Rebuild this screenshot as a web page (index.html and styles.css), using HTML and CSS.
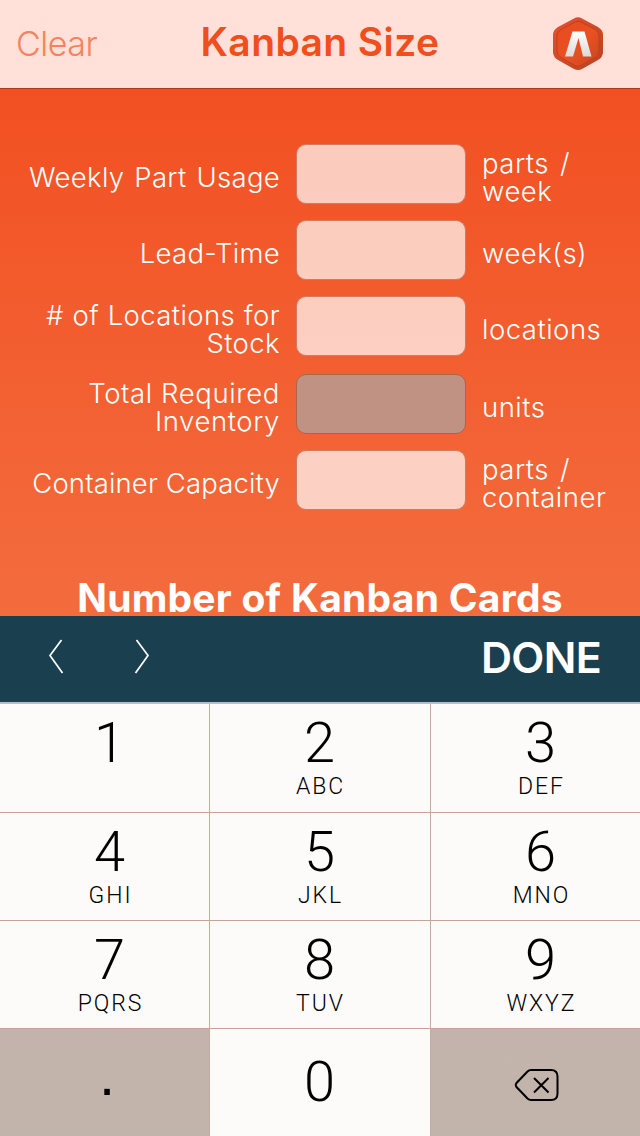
FILE: index.html
```html
<!DOCTYPE html>
<html lang="en">
<head>
<meta charset="utf-8">
<title>Kanban Size</title>
<link rel="stylesheet" href="styles.css">
</head>
<body>
<div class="screen">
  <header class="navbar">
    <span class="clear">Clear</span>
    <h1 class="title">Kanban Size</h1>
    <svg class="logo" width="52" height="56" viewBox="0 0 52 56">
      <defs>
        <linearGradient id="rim" x1="0" y1="0" x2="1" y2="1"><stop offset="0" stop-color="#e8502f"/><stop offset="1" stop-color="#b9421f"/></linearGradient>
        <linearGradient id="face" x1="0" y1="0" x2="1" y2="1"><stop offset="0" stop-color="#e84b20"/><stop offset=".55" stop-color="#e95022"/><stop offset="1" stop-color="#c44720"/></linearGradient>
        <linearGradient id="mark" x1="0" y1="0" x2="0" y2="1"><stop offset="0" stop-color="#fff"/><stop offset="1" stop-color="#ddd9d8"/></linearGradient>
      </defs>
      <path d="M22 2.400Q26 0.200 30 2.400L46 11Q51 14 51 19V36Q51 41 46 44L30 53Q26 55.200 22 53L6 44Q1 41 1 36V19Q1 14 6 11Z" fill="url(#rim)"/>
      <path d="M23 6Q26 4.500 29 6L43 13.500Q47 16 47 20V35Q47 39 43 41.500L29 49.500Q26 51 23 49.500L9 41.500Q5 39 5 35V20Q5 16 9 13.500Z" fill="url(#face)" stroke="#bd4020" stroke-width="1"/>
      <path d="M20.500 15.500H32.500L39.500 40.500H31L26.500 22L21 40.500H13Z" fill="url(#mark)"/>
    </svg>
  </header>

  <main class="form">
    <div class="row"><label class="label">Weekly Part Usage</label><div class="field"></div><span class="unit">parts /<br>week</span></div>
    <div class="row"><label class="label">Lead-Time</label><div class="field"></div><span class="unit">week(s)</span></div>
    <div class="row row-total"><label class="label label-stock"># of Locations for<br>Stock</label><div class="field"></div><span class="unit">locations</span></div>
    <div class="row"><label class="label label-wide">Total Required<br>Inventory</label><div class="field field-disabled"></div><span class="unit">units</span></div>
    <div class="row"><label class="label label-tight">Container Capacity</label><div class="field"></div><span class="unit">parts /<br>container</span></div>
    <h2 class="result">Number of Kanban Cards</h2>
  </main>

  <div class="toolbar">
    <svg class="arrows" width="104" height="36" viewBox="0 0 104 36" fill="none" stroke="#fff" stroke-width="1.700"><path d="M14.500 1 3 16.500 15.500 34"/><path d="M89.500 1 101 16.500 88.500 34"/></svg>
    <span class="done">DONE</span>
  </div>

  <div class="keypad">
    <div class="key"><b class="digit">1</b></div>
    <div class="key mid"><b class="digit">2</b><span class="letters">ABC</span></div>
    <div class="key"><b class="digit">3</b><span class="letters">DEF</span></div>
    <div class="key"><b class="digit">4</b><span class="letters">GHI</span></div>
    <div class="key mid"><b class="digit">5</b><span class="letters">JKL</span></div>
    <div class="key"><b class="digit">6</b><span class="letters">MNO</span></div>
    <div class="key"><b class="digit">7</b><span class="letters">PQRS</span></div>
    <div class="key mid"><b class="digit">8</b><span class="letters">TUV</span></div>
    <div class="key"><b class="digit">9</b><span class="letters">WXYZ</span></div>
    <div class="key dark point"><b class="dot">.</b></div>
    <div class="key mid zero"><b class="digit">0</b></div>
    <div class="key dark erase">
      <svg width="46" height="34" viewBox="0 0 46 34" fill="none" stroke="#000" stroke-width="2"><path d="M17 2H37Q43.500 2 43.500 8.500V25.500Q43.500 32 37 32H17Q15 32 13.500 30.500L2.500 19Q1 17 2.500 15L13.500 3.500Q15 2 17 2Z"/><path d="M20 10 34.500 24.500M34.500 10 20 24.500"/></svg>
    </div>
  </div>
</div>
</body>
</html>
```
FILE: styles.css
```css
* { box-sizing: border-box; }
body { margin: 0; font-family: Inter, "Liberation Sans", sans-serif; }
.screen {
  width: 640px;
  height: 1136px;
  display: flex;
  flex-direction: column;
  overflow: hidden;
}
.navbar {
  height: 89px;
  flex: none;
  display: grid;
  grid-template-columns: 160px 320px 160px;
  align-items: center;
  background: #ffe1d9;
  border-bottom: 1px solid #a83c1c;
}
.clear {
  padding-left: 16px;
  padding-bottom: 2px;
  font-size: 34px;
  font-weight: 300;
  letter-spacing: -0.500px;
  color: #f58260;
}
.title {
  margin: 0;
  padding-bottom: 6px;
  text-align: center;
  white-space: nowrap;
  font-size: 39px;
  font-weight: 600;
  letter-spacing: 0.400px;
  color: #f04e1c;
}
.logo { margin-left: 72px; }
.form {
  height: 527px;
  flex: none;
  padding-top: 55px;
  overflow: hidden;
  background: linear-gradient(#f25022, #f36c3e);
  color: #fff;
}
.row {
  height: 60px;
  margin-bottom: 16px;
  display: grid;
  grid-template-columns: 280px 170px 1fr;
  grid-template-rows: 60px;
  column-gap: 16px;
  align-items: center;
}
.row-total { margin-bottom: 18px; }
.label, .unit {
  padding-top: 5px;
  font-size: 27.500px;
  font-weight: 300;
  line-height: 28px;
  white-space: nowrap;
}
.label { text-align: right; letter-spacing: 0.300px; word-spacing: 2px; }
.label-stock { letter-spacing: 0.400px; word-spacing: 0.500px; }
.label-wide { letter-spacing: 0.600px; word-spacing: 0; }
.label-tight { letter-spacing: 0.150px; word-spacing: 0; }
.unit { letter-spacing: 0.500px; word-spacing: 3px; }
.field {
  height: 60px;
  background: rgba(255, 255, 255, 0.700);
  border: 1px solid #d07a60;
  border-radius: 10px;
}
.field-disabled { background: #c09284; border-color: #a9654e; }
.result {
  margin: 70px 0 0;
  text-align: center;
  white-space: nowrap;
  font-size: 39px;
  line-height: 35px;
  font-weight: 700;
  letter-spacing: 0.250px;
}
.toolbar {
  height: 88px;
  flex: none;
  display: flex;
  justify-content: space-between;
  align-items: center;
  padding: 0 39px 4px 47px;
  background: #1a4050;
  border-bottom: 2px solid #bdbcc6;
}
.done {
  color: #fff;
  font-size: 43px;
  font-weight: 600;
  letter-spacing: -0.700px;
}
.keypad {
  flex: 1;
  display: grid;
  grid-template-columns: 210px 221px 209px;
  grid-template-rows: 109px 108px 108px 107px;
  background: #fdfbfa;
  font-family: Roboto, "Liberation Sans", sans-serif;
  color: #000;
}
.key {
  display: flex;
  flex-direction: column;
  align-items: center;
  padding: 9px 0 0 11px;
  border-right: 1px solid #c5aa9e;
  border-bottom: 1px solid #c5a598;
}
.mid { padding-left: 0; }
.key:nth-child(3n) { border-right: 0; }
.key:nth-child(n+10) { border-bottom: 0; }
.digit {
  padding-right: 1px;
  font-size: 56px;
  line-height: 60px;
  font-weight: 300;
}
.letters {
  padding-left: 1px;
  font-size: 23px;
  line-height: 27px;
  font-weight: 300;
  letter-spacing: 1.900px;
}
.dark { background: linear-gradient(#c3b3ac, #c1b4aa); }
.zero { padding-top: 23px; }
.point { padding: 15px 0 0 5px; }
.dot {
  font-family: "Liberation Sans", Arial, sans-serif;
  font-size: 58px;
  line-height: 62px;
  font-weight: 400;
}
.erase { padding: 39px 0 0 3px; }
```
